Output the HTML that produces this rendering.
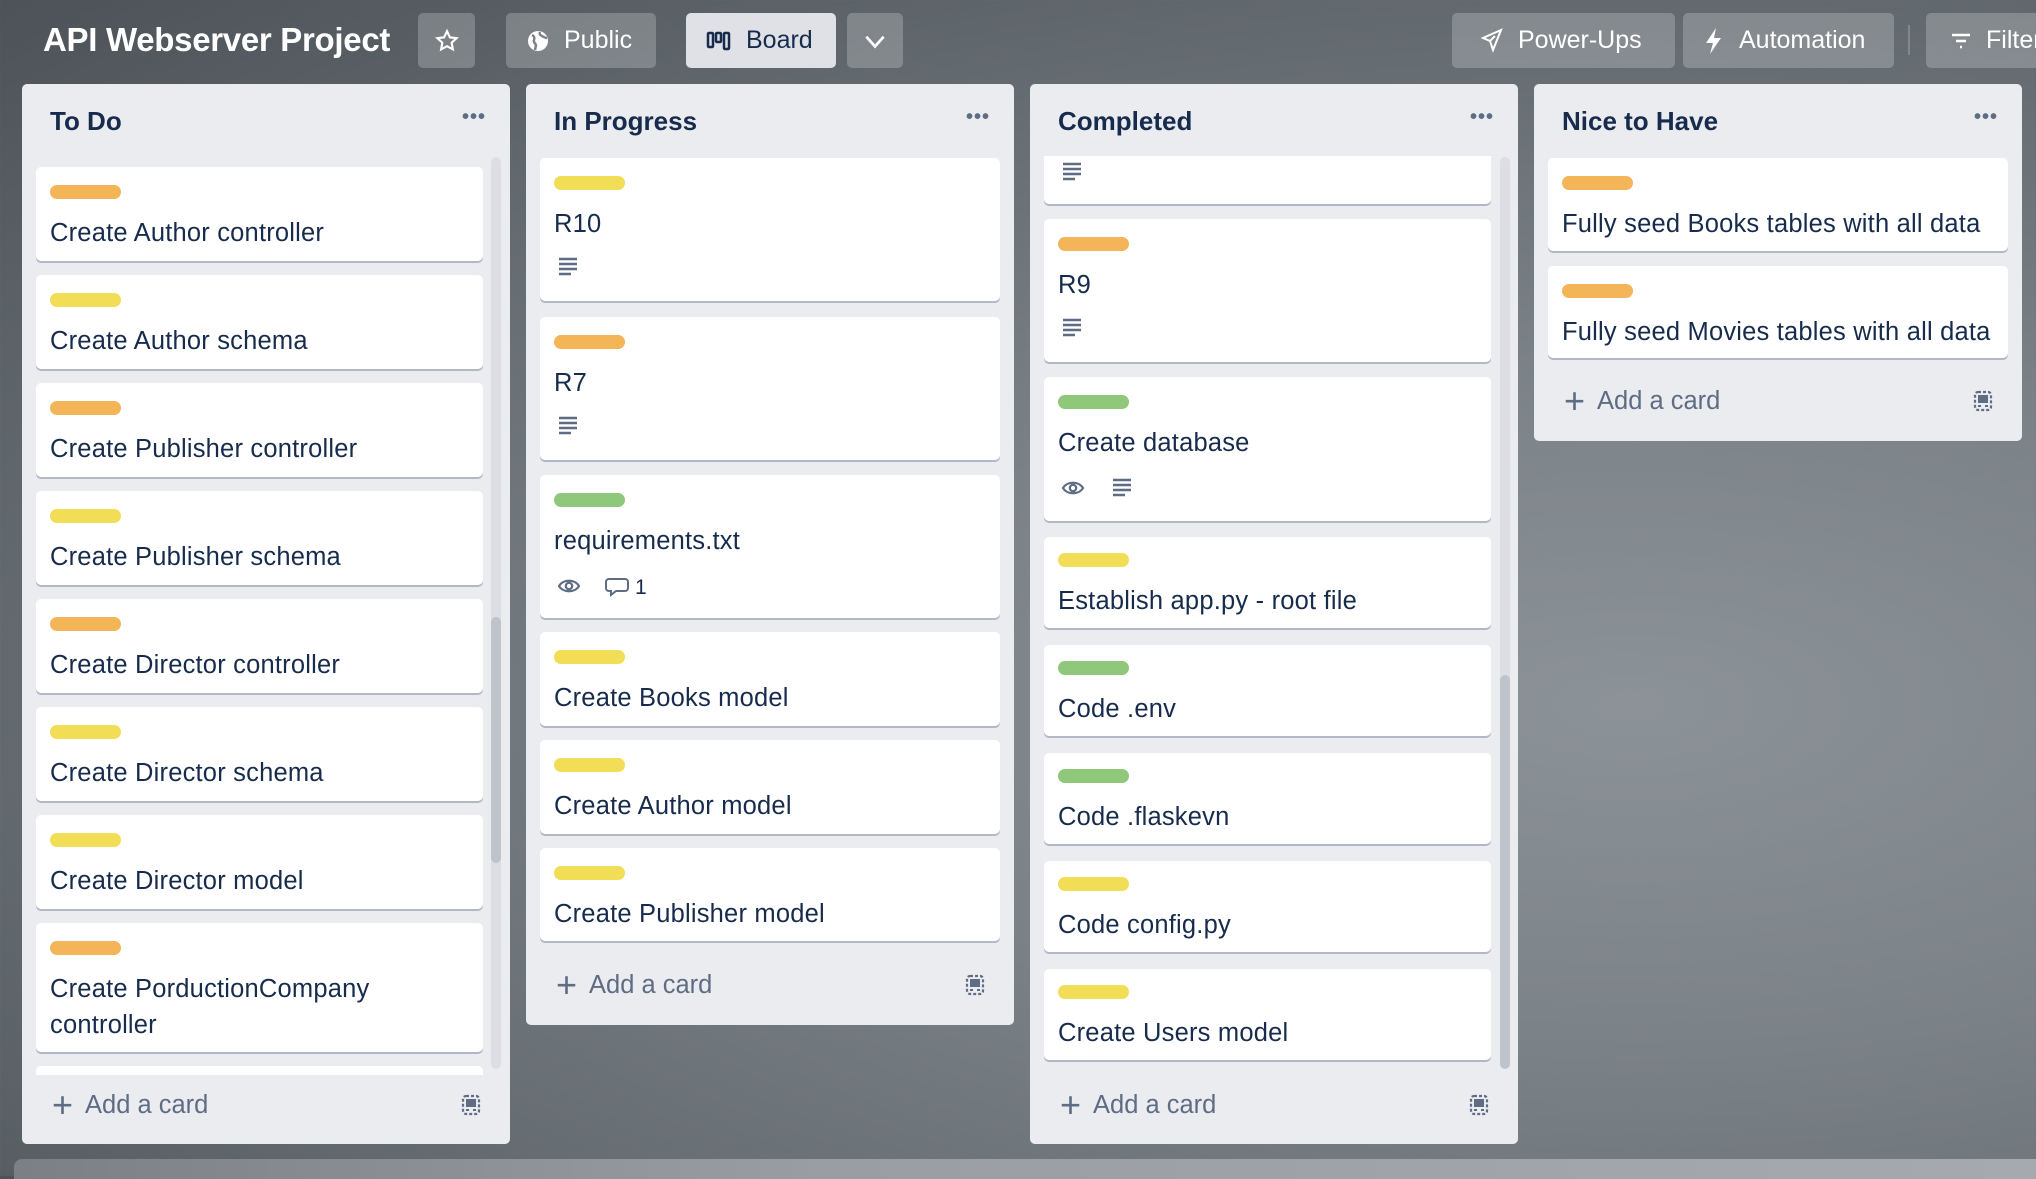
<!DOCTYPE html>
<html><head><meta charset="utf-8">
<style>
*{box-sizing:border-box;margin:0;padding:0}
body{width:2036px;height:1176px;overflow:hidden;position:relative;font-family:"Liberation Sans",sans-serif;color:#172b4d;
background:radial-gradient(ellipse at 80% 60%,#8c9398 0%,#7a8187 35%,#62696f 70%,#4c5257 100%);}
.hb{position:absolute;top:13px;height:55px;border-radius:5px;background:rgba(255,255,255,.22);color:#fff;font-size:25px;display:flex;align-items:center;gap:14px;padding:0 20px}
.title{position:absolute;left:43px;top:21px;font-size:33px;font-weight:bold;color:#fff;letter-spacing:-0.3px}
.list{position:absolute;width:488px;background:#ebecf0;border-radius:5px;top:84px}
.lh{position:absolute;left:28px;top:22px;font-size:26px;font-weight:bold}
.dots{position:absolute;right:24px;top:22px;font-size:20px;color:#5e6c84;letter-spacing:1px;font-weight:bold}
.card{position:absolute;background:#fff;border-radius:5px;box-shadow:0 2px 0 rgba(9,30,66,.25);overflow:hidden}
.lb{position:absolute;left:14px;top:18px;width:71px;height:14px;border-radius:7px}
.o{background:#f4b458}.y{background:#f1dd56}.g{background:#8fc87a}
.t{position:absolute;left:14px;top:48px;font-size:25.5px;line-height:36px;white-space:nowrap;letter-spacing:0.2px}
.ic{position:absolute;left:18px;top:99px}
.add{position:absolute;left:30px;font-size:25.5px;color:#5e6c84;display:flex;align-items:center;gap:12px}
.add span{font-size:36px;font-weight:300;line-height:30px}
.sb{position:absolute;width:10px;border-radius:5px;background:#dcdee4}
.sbt{position:absolute;left:0;width:10px;border-radius:5px;background:#bfc3cc}
</style></head><body>
<div class="title">API Webserver Project</div>
<div class="hb" style="left:418px;width:57px;padding:0;justify-content:center"><svg width="26" height="26" viewBox="0 0 24 24" fill="none" stroke="#fff" stroke-width="2"><path d="M12 3l2.7 5.6 6.1.8-4.5 4.2 1.1 6.1L12 16.8 6.6 19.7l1.1-6.1L3.2 9.4l6.1-.8z"/></svg></div>
<div class="hb" style="left:506px;width:150px"><svg width="24" height="24" viewBox="0 0 24 24"><circle cx="12" cy="12" r="10" fill="#fff"/><path d="M6 6c2 1 3 3 2 5s1 3 2 5l-1 5M14 3c-1 2 0 3 2 4s3 2 5 2" stroke="#7d8389" stroke-width="2.5" fill="none"/></svg>Public</div>
<div class="hb" style="left:686px;width:150px;background:#dfe1e6;color:#172b4d"><svg width="26" height="22" viewBox="0 0 26 22" fill="none" stroke="#172b4d" stroke-width="2.5"><rect x="2" y="3" width="5" height="14" rx="1"/><rect x="10" y="3" width="5" height="9" rx="1"/><rect x="18" y="3" width="5" height="16" rx="1"/></svg>Board</div>
<div class="hb" style="left:847px;width:56px;padding:0;justify-content:center"><svg width="26" height="26" viewBox="0 0 24 24" fill="none" stroke="#fff" stroke-width="2.5"><path d="M4 8l8 9 8-9"/></svg></div>
<div class="hb" style="left:1452px;width:223px;padding-left:28px"><svg width="24" height="26" viewBox="0 0 24 26" fill="none" stroke="#fff" stroke-width="2"><path d="M21 2L3 10l7 3 3 9z"/><path d="M10 13l5-5"/></svg>Power-Ups</div>
<div class="hb" style="left:1683px;width:211px;padding-left:20px"><svg width="22" height="28" viewBox="0 0 22 28" fill="#fff"><path d="M13 1L3 16h7l-3 11 11-16h-7z"/></svg>Automation</div>
<div style="position:absolute;left:1908px;top:25px;width:2px;height:30px;background:rgba(255,255,255,.2)"></div>
<div class="hb" style="left:1926px;width:140px;padding-left:24px"><svg width="22" height="18" viewBox="0 0 22 18" fill="none" stroke="#fff" stroke-width="2.5"><path d="M2 3h18M6 9h10M10 15h2"/></svg>Filter</div>

<div class="list" style="left:22px;height:1060px">
<div class="lh">To Do</div><div class="dots">•••</div>
<div class="sb" style="left:469px;top:73px;height:912px"><div class="sbt" style="top:460px;height:246px"></div></div>
<div class="add" style="top:1006px"><span>+</span>Add a card</div>
</div>
<div class="list" style="left:526px;height:941px">
<div class="lh">In Progress</div><div class="dots">•••</div>
<div class="add" style="top:886px"><span>+</span>Add a card</div>
</div>
<div class="list" style="left:1030px;height:1060px">
<div class="lh">Completed</div><div class="dots">•••</div>
<div class="sb" style="left:470px;top:73px;height:912px"><div class="sbt" style="top:518px;height:394px"></div></div>
<div class="add" style="top:1006px"><span>+</span>Add a card</div>
</div>
<div class="list" style="left:1534px;height:357px">
<div class="lh">Nice to Have</div><div class="dots">•••</div>
<div class="add" style="top:302px"><span>+</span>Add a card</div>
</div>

<svg width="0" height="0" style="position:absolute"><defs>
<g id="desc"><path d="M1 2h18M1 7h18M1 12h18M1 17h12" stroke="#5e6c84" stroke-width="2.4"/></g>
<g id="tp"><rect x="3" y="4" width="16" height="18" rx="3" fill="none" stroke="#5e6c84" stroke-width="2.2" stroke-dasharray="3 2"/><rect x="6" y="7" width="10" height="8" fill="#5e6c84"/><rect x="6" y="17" width="3" height="2" fill="#5e6c84"/><rect x="13" y="17" width="3" height="2" fill="#5e6c84"/></g>
</defs></svg>
<svg style="position:absolute;left:460px;top:1092px" width="22" height="26"><use href="#tp"/></svg>
<svg style="position:absolute;left:964px;top:972px" width="22" height="26"><use href="#tp"/></svg>
<svg style="position:absolute;left:1468px;top:1092px" width="22" height="26"><use href="#tp"/></svg>
<svg style="position:absolute;left:1972px;top:388px" width="22" height="26"><use href="#tp"/></svg>

<div class="card" style="left:36px;top:167px;width:447px;height:94px"><div class="lb o"></div><div class="t">Create Author controller</div></div>
<div class="card" style="left:36px;top:275px;width:447px;height:94px"><div class="lb y"></div><div class="t">Create Author schema</div></div>
<div class="card" style="left:36px;top:383px;width:447px;height:94px"><div class="lb o"></div><div class="t">Create Publisher controller</div></div>
<div class="card" style="left:36px;top:491px;width:447px;height:94px"><div class="lb y"></div><div class="t">Create Publisher schema</div></div>
<div class="card" style="left:36px;top:599px;width:447px;height:94px"><div class="lb o"></div><div class="t">Create Director controller</div></div>
<div class="card" style="left:36px;top:707px;width:447px;height:94px"><div class="lb y"></div><div class="t">Create Director schema</div></div>
<div class="card" style="left:36px;top:815px;width:447px;height:94px"><div class="lb y"></div><div class="t">Create Director model</div></div>
<div class="card" style="left:36px;top:923px;width:447px;height:129px"><div class="lb o"></div><div class="t">Create PorductionCompany<br>controller</div></div>
<div class="card" style="left:36px;top:1066px;width:447px;height:9px;box-shadow:none;border-radius:5px 5px 0 0"></div>

<div class="card" style="left:540px;top:158px;width:460px;height:143px"><div class="lb y"></div><div class="t">R10</div><svg class="ic" width="22" height="20"><use href="#desc"/></svg></div>
<div class="card" style="left:540px;top:317px;width:460px;height:143px"><div class="lb o"></div><div class="t">R7</div><svg class="ic" width="22" height="20"><use href="#desc"/></svg></div>
<div class="card" style="left:540px;top:475px;width:460px;height:143px"><div class="lb g"></div><div class="t">requirements.txt</div>
<svg class="ic" style="left:18px;top:100px" width="100" height="22"><path d="M1 11c4-7 16-7 20 0c-4 7-16 7-20 0z" fill="none" stroke="#5e6c84" stroke-width="2.2"/><circle cx="11" cy="11" r="3.2" fill="none" stroke="#5e6c84" stroke-width="2.2"/><path d="M51 4h16a3 3 0 013 3v6a3 3 0 01-3 3h-9l-5 4v-4h-2a3 3 0 01-3-3V7a3 3 0 013-3z" fill="none" stroke="#5e6c84" stroke-width="2"/><text x="77" y="19" font-family="Liberation Sans" font-size="21" fill="#172b4d">1</text></svg></div>
<div class="card" style="left:540px;top:632px;width:460px;height:94px"><div class="lb y"></div><div class="t">Create Books model</div></div>
<div class="card" style="left:540px;top:740px;width:460px;height:94px"><div class="lb y"></div><div class="t">Create Author model</div></div>
<div class="card" style="left:540px;top:848px;width:460px;height:93px"><div class="lb y"></div><div class="t">Create Publisher model</div></div>

<div class="card" style="left:1044px;top:156px;width:447px;height:48px;border-radius:0 0 5px 5px"><svg class="ic" style="top:6px" width="22" height="20"><use href="#desc"/></svg></div>
<div class="card" style="left:1044px;top:219px;width:447px;height:143px"><div class="lb o"></div><div class="t">R9</div><svg class="ic" width="22" height="20"><use href="#desc"/></svg></div>
<div class="card" style="left:1044px;top:377px;width:447px;height:144px"><div class="lb g"></div><div class="t">Create database</div>
<svg class="ic" style="top:100px" width="80" height="22"><path d="M1 11c4-7 16-7 20 0c-4 7-16 7-20 0z" fill="none" stroke="#5e6c84" stroke-width="2.2"/><circle cx="11" cy="11" r="3.2" fill="none" stroke="#5e6c84" stroke-width="2.2"/><g transform="translate(50,1)"><use href="#desc"/></g></svg></div>
<div class="card" style="left:1044px;top:537px;width:447px;height:91px"><div class="lb y" style="top:16px"></div><div class="t" style="top:46px">Establish app.py - root file</div></div>
<div class="card" style="left:1044px;top:645px;width:447px;height:91px"><div class="lb g" style="top:16px"></div><div class="t" style="top:46px">Code .env</div></div>
<div class="card" style="left:1044px;top:753px;width:447px;height:91px"><div class="lb g" style="top:16px"></div><div class="t" style="top:46px">Code .flaskevn</div></div>
<div class="card" style="left:1044px;top:861px;width:447px;height:91px"><div class="lb y" style="top:16px"></div><div class="t" style="top:46px">Code config.py</div></div>
<div class="card" style="left:1044px;top:969px;width:447px;height:91px"><div class="lb y" style="top:16px"></div><div class="t" style="top:46px">Create Users model</div></div>

<div class="card" style="left:1548px;top:158px;width:460px;height:93px"><div class="lb o"></div><div class="t">Fully seed Books tables with all data</div></div>
<div class="card" style="left:1548px;top:266px;width:460px;height:92px"><div class="lb o"></div><div class="t">Fully seed Movies tables with all data</div></div>

<div style="position:absolute;left:14px;top:1159px;width:2030px;height:20px;border-radius:8px 0 0 0;background:linear-gradient(90deg,#7c7f83,#9a9ea2 40%,#a6aaae)"></div>
</body></html>
